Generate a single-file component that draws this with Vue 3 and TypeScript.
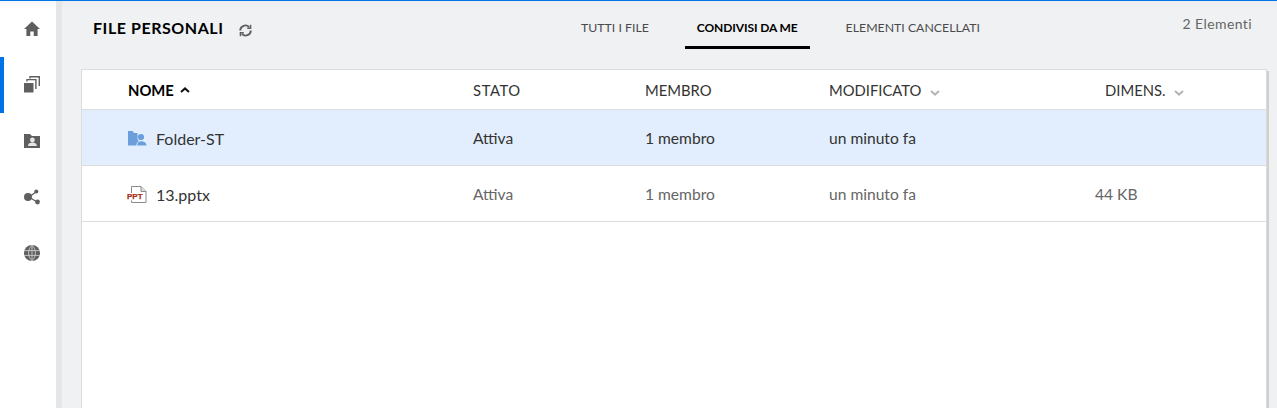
<script setup lang="ts">
interface Row { name: string; kind: 'folder' | 'ppt'; size: string; selected: boolean }
const rows: Row[] = [
  { name: 'Folder-ST', kind: 'folder', size: '', selected: true },
  { name: '13.pptx', kind: 'ppt', size: '44 KB', selected: false },
]
</script>

<template>
  <div class="app">
    <nav class="side">
      <div class="nav-item">
        <svg width="16" height="16" viewBox="0 0 16 16"><path d="M8 .5 16 8h-2.400v7H9.700v-4.600H6.300V15H2.400V8H0z" fill="#5f5f5f"/></svg>
      </div>
      <div class="nav-item active">
        <svg class="stack" width="16" height="17" viewBox="0 0 16 17"><path d="M0 7h9.500v9.500H0z" fill="#5f5f5f"/><path d="M3 5.500V3.600h8.900V13M6 2.500V.7h9.300V10" fill="none" stroke="#5f5f5f" stroke-width="1.400"/></svg>
      </div>
      <div class="nav-item">
        <svg width="16" height="14" viewBox="0 0 16 14"><path d="M0 0h6l2 2h8v12H0z" fill="#5f5f5f"/><circle cx="8.400" cy="6" r="2.400" fill="#e6e6e6"/><path d="M4 12c0-2.600 2-3.400 4.400-3.400S12.800 9.400 12.800 12z" fill="#e6e6e6"/></svg>
      </div>
      <div class="nav-item">
        <svg width="16" height="16" viewBox="0 0 16 16"><path d="M5 8l7-5M5 8l8 5" stroke="#5f5f5f" stroke-width="1.400"/><circle cx="4" cy="8" r="4" fill="#5f5f5f"/><circle cx="12.300" cy="2.500" r="2" fill="#5f5f5f"/><circle cx="13.500" cy="13" r="2.400" fill="#5f5f5f"/></svg>
      </div>
      <div class="nav-item">
        <svg width="16" height="16" viewBox="0 0 16 16"><circle cx="8" cy="8" r="8" fill="#5f5f5f"/><path d="M0 5.600h16M0 10.400h16M8 0v16M8 .3C3.500 4 3.500 12 8 15.700M8 .3c4.500 3.700 4.500 11.700 0 15.400" fill="none" stroke="#d8d8d8" stroke-width=".8"/></svg>
      </div>
    </nav>
    <div class="gutter"></div>
    <main class="main">
      <header class="head">
        <div class="title">
          <h1>FILE PERSONALI</h1>
          <svg class="refresh" width="13" height="13" viewBox="0 0 13 13" fill="none" stroke="#5f5f5f" stroke-width="1.900">
            <path d="M1.200 6.500a5.200 5.200 0 0 1 9-3.400M11.800 6.500a5.200 5.200 0 0 1-9 3.400"/>
            <path d="M11.600.8v3.400H8.200M1.400 12.200V8.800h3.400" stroke-width="1.400"/>
          </svg>
        </div>
        <div class="tabs">
          <span class="tab">TUTTI I FILE</span>
          <span class="tab on">CONDIVISI DA ME</span>
          <span class="tab">ELEMENTI CANCELLATI</span>
        </div>
        <div class="count">2 Elementi</div>
      </header>
      <section class="card">
        <div class="grid hdr">
          <div class="c-name strong">NOME
            <svg width="10" height="6" viewBox="0 0 10 6" fill="none" stroke="#111" stroke-width="2"><path d="M1 5l4-3.600L9 5"/></svg>
          </div>
          <div class="c-stato">STATO</div>
          <div>MEMBRO</div>
          <div>MODIFICATO
            <svg class="caret" width="10" height="6" viewBox="0 0 10 6" fill="none" stroke="#b5b5b5" stroke-width="2"><path d="M1 1l4 3.600L9 1"/></svg>
          </div>
          <div class="c-dim">DIMENS.
            <svg class="caret" width="10" height="6" viewBox="0 0 10 6" fill="none" stroke="#b5b5b5" stroke-width="2"><path d="M1 1l4 3.600L9 1"/></svg>
          </div>
        </div>
        <div v-for="r in rows" :key="r.name" class="grid row" :class="{ sel: r.selected }">
          <div class="c-name file">
            <svg v-if="r.kind === 'folder'" class="ficon" width="19" height="15" viewBox="0 0 19 15">
              <path d="M0 0h4.500l1.500 2h3.500v4.500c-.2 1.800.5 3 1.500 3.600-1.500.7-2.400 2-2.700 4.400H0z" fill="#6a9fdc"/>
              <circle cx="13" cy="6" r="3.100" fill="#6a9fdc"/>
              <path d="M9.200 14.500c0-3 1.500-4.300 3.800-4.300s5.500 1.300 5.500 4.300z" fill="#6a9fdc"/>
            </svg>
            <svg v-else class="ficon pp" width="20" height="17" viewBox="0 0 20 17">
              <path d="M4.500 7V.5h9.500l5 5v11H4.500V14.500" fill="#fff" stroke="#8a8a8a"/>
              <path d="M14 .5v5h5" fill="#ddd" stroke="#8a8a8a"/>
              <text x="0" y="13" class="ppt">PPT</text>
            </svg>
            <span>{{ r.name }}</span>
          </div>
          <div>Attiva</div>
          <div>1 membro</div>
          <div>un minuto fa</div>
          <div>{{ r.size }}</div>
        </div>
      </section>
    </main>
  </div>
</template>

<style>
html, body { margin: 0; height: 100%; overflow: hidden; }
</style>

<style scoped>
.app {
  display: flex;
  height: 408px;
  box-sizing: border-box;
  border-top: 1px solid #0073e7;
  background: #f0f1f3;
  font-family: Lato, "Liberation Sans", sans-serif;
  color: #3a3a3a;
  overflow: hidden;
}
.side { width: 56px; flex: none; background: linear-gradient(#f8f8f8, #fff 8px); }
.nav-item {
  height: 56px;
  display: flex;
  align-items: center;
  justify-content: center;
  padding-left: 8px;
  box-sizing: border-box;
}
.nav-item.active { box-shadow: inset 4px 0 0 #0073e7; }
.stack { margin-top: -2px; }
.gutter { width: 6px; flex: none; background: #e5e6e7; }
.main { flex: 1; display: flex; flex-direction: column; padding: 0 10px 0 19px; min-width: 0; background: linear-gradient(#ecedee, #f0f1f3 8px); }
.head { height: 68px; flex: none; position: relative; display: flex; }
.title { display: flex; align-items: center; height: 56px; padding-left: 12px; gap: 15px; }
h1 { margin: -3px 0 0; font-size: 16px; font-weight: 700; color: #000; letter-spacing: .55px; }
.refresh { margin-top: 2px; }
.tabs {
  position: absolute;
  left: 500px;
  top: 0;
  display: flex;
  gap: 36px;
}
.tab {
  display: block;
  font-size: 12.300px;
  line-height: 54px;
  height: 47px;
  color: #4a4a4a;
}
.tab.on { font-weight: 700; font-size: 12px; letter-spacing: -.1px; color: #000; padding: 0 12px; position: relative; }
.tab.on::after { content: ""; position: absolute; left: 0; right: 0; top: 45px; height: 3px; background: #000; }
.count { position: absolute; right: 15px; top: 14px; font-size: 14px; color: #666; letter-spacing: .4px; }
.card {
  flex: 1;
  background: #fff;
  border: 1px solid #dcdcdc;
  border-bottom: 0;
  box-shadow: 2px 2px 0 #cfcfcf;
}
.grid {
  display: grid;
  grid-template-columns: 391px 172px 184px 266px 1fr;
  align-items: center;
  font-size: 14.800px;
  box-sizing: border-box;
  border-bottom: 1px solid #dcdcdc;
}
.hdr { height: 40px; color: #333; padding-top: 1px; }
.hdr .c-dim { padding-left: 10px; }
.c-stato { letter-spacing: .6px; }
.row { height: 56px; color: #666; font-size: 15.600px; padding-top: 1px; }
.row.sel { background: #e2eefd; color: #333; }
.c-name { padding-left: 46px; display: flex; align-items: center; }
.strong { color: #000; font-weight: 700; gap: 6px; }
.caret { margin-left: 5px; }
.file { gap: 9px; color: #333; font-size: 16px; }
.ficon { flex: none; }
.pp { margin-left: -1px; }
.ppt { font: 700 8px "Liberation Sans", sans-serif; fill: #a8301a; stroke: #a8301a; stroke-width: .25px; }
</style>
